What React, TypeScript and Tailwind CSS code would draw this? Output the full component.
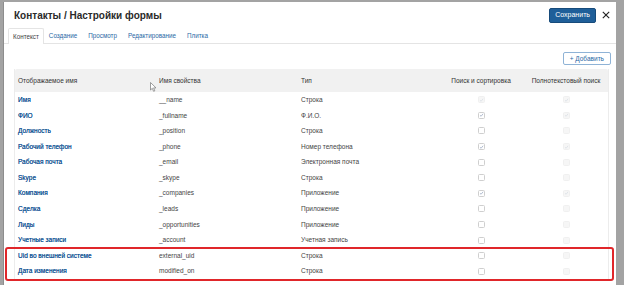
import React from 'react';

type Row = {
  label: string;
  prop: string;
  type: string;
  search: 'on' | 'off' | 'onDisabled';
  full: 'onDisabled' | 'offDisabled';
};

const rows: Row[] = [
  { label: 'Имя', prop: '__name', type: 'Строка', search: 'onDisabled', full: 'onDisabled' },
  { label: 'ФИО', prop: '_fullname', type: 'Ф.И.О.', search: 'on', full: 'onDisabled' },
  { label: 'Должность', prop: '_position', type: 'Строка', search: 'off', full: 'offDisabled' },
  { label: 'Рабочий телефон', prop: '_phone', type: 'Номер телефона', search: 'on', full: 'onDisabled' },
  { label: 'Рабочая почта', prop: '_email', type: 'Электронная почта', search: 'off', full: 'offDisabled' },
  { label: 'Skype', prop: '_skype', type: 'Строка', search: 'off', full: 'offDisabled' },
  { label: 'Компания', prop: '_companies', type: 'Приложение', search: 'on', full: 'onDisabled' },
  { label: 'Сделка', prop: '_leads', type: 'Приложение', search: 'off', full: 'offDisabled' },
  { label: 'Лиды', prop: '_opportunities', type: 'Приложение', search: 'off', full: 'offDisabled' },
  { label: 'Учетные записи', prop: '_account', type: 'Учетная запись', search: 'off', full: 'offDisabled' },
  { label: 'Uid во внешней системе', prop: 'external_uid', type: 'Строка', search: 'off', full: 'offDisabled' },
  { label: 'Дата изменения', prop: 'modified_on', type: 'Строка', search: 'off', full: 'offDisabled' },
];

function Check({ state }: { state: string }) {
  const checked = state === 'on' || state === 'onDisabled';
  const disabled = state === 'onDisabled' || state === 'offDisabled';
  return (
    <div
      className={
        'w-[7px] h-[7px] rounded-[1.5px] flex items-center justify-center ' +
        (disabled ? 'bg-[#f6f6f6] border border-[#f0f0f0]' : 'bg-white border border-[#cfcfcf]')
      }
    >
      {checked && (
        <svg width="6" height="6" viewBox="0 0 10 10">
          <path d="M2 5.5 L4.2 7.5 L8.2 2.5" fill="none" stroke={disabled ? '#d4dae2' : '#8a9bb8'} strokeWidth="1.3" />
        </svg>
      )}
    </div>
  );
}

const cols = 'grid grid-cols-[141px_142px_141px_84px_86px]';

export default function App() {
  return (
    <div className="w-[624px] h-[285px] bg-[#a3a3a3] overflow-hidden relative" style={{ fontFamily: '"Liberation Sans", Arial, sans-serif' }}>
      <div className="ml-[3px] mt-[2px] w-[613px] h-[300px] bg-white border-l border-[#8d8d8d]">
        {/* header */}
        <div className="h-[26px] flex items-center justify-between pl-[10px] pr-[6px]">
          <h1 className="text-[10px] font-semibold text-[#2a2a2a]">Контакты / Настройки формы</h1>
          <div className="flex items-center gap-[6px]">
            <button className="h-[15px] px-[5px] bg-[#1f5f99] border border-[#174b7b] rounded-[2px] text-white text-[7px]">Сохранить</button>
            <svg width="8" height="8" viewBox="0 0 10 10">
              <path d="M1 1 L9 9 M9 1 L1 9" stroke="#222" strokeWidth="1.4" />
            </svg>
          </div>
        </div>
        {/* tabs */}
        <div className="h-[16px] flex items-end pl-[4px] border-b border-[#e4e4e4]">
          <div className="h-[16px] px-[4px] flex items-center border border-b-0 border-[#e4e4e4] rounded-t-[2px] bg-white text-[6.3px] text-[#444] -mb-px">Контекст</div>
          <div className="flex items-center h-[15px] text-[6.3px] text-[#2a68a5] gap-[11px] pl-[5px]">
            <span>Создание</span>
            <span>Просмотр</span>
            <span>Редактирование</span>
            <span>Плитка</span>
          </div>
        </div>
        {/* content */}
        <div className="pl-[10px] pr-[5px]">
          <div className="flex justify-end pt-[8px] pb-[4px]">
            <button className="h-[13px] px-[6px] border border-[#8fb3d6] rounded-[2px] text-[6.5px] text-[#2a68a5] bg-white">+ Добавить</button>
          </div>
          <div className="w-[595px] border-r border-[#ececec] border-l">
            <div className={cols + ' h-[23px] items-center bg-[#f1f1f1] text-[6.5px] text-[#333] rounded-t-[2px]'}>
              <div className="pl-[3px]">Отображаемое имя</div>
              <div className="pl-[3px]">Имя свойства</div>
              <div className="pl-[3px]">Тип</div>
              <div className="text-center">Поиск и сортировка</div>
              <div className="text-center">Полнотекстовый поиск</div>
            </div>
            {rows.map((r) => (
              <div key={r.prop} className={cols + ' h-[15.6px] items-center text-[6.5px]'}>
                <div className="pl-[3px] text-[#1b5896] [text-shadow:0_0_0.3px_#1b5896]">{r.label}</div>
                <div className="pl-[3px] text-[#444]">{r.prop}</div>
                <div className="pl-[3px] text-[#444]">{r.type}</div>
                <div className="flex justify-center"><Check state={r.search} /></div>
                <div className="flex justify-center"><Check state={r.full} /></div>
              </div>
            ))}
          </div>
        </div>
      </div>
      {/* annotation */}
      <div className="absolute left-[5px] top-[247px] w-[609px] h-[34px] border-2 border-[#e0262a] rounded-[3px]" />
      {/* mouse cursor */}
      <svg className="absolute left-[150px] top-[82px]" width="7" height="10" viewBox="0 0 7 10">
        <path d="M0.5 0.5 L0.5 8 L2.3 6.3 L3.6 9.3 L4.8 8.8 L3.6 5.9 L6 5.9 Z" fill="white" stroke="#777" strokeWidth="0.7" />
      </svg>
    </div>
  );
}
